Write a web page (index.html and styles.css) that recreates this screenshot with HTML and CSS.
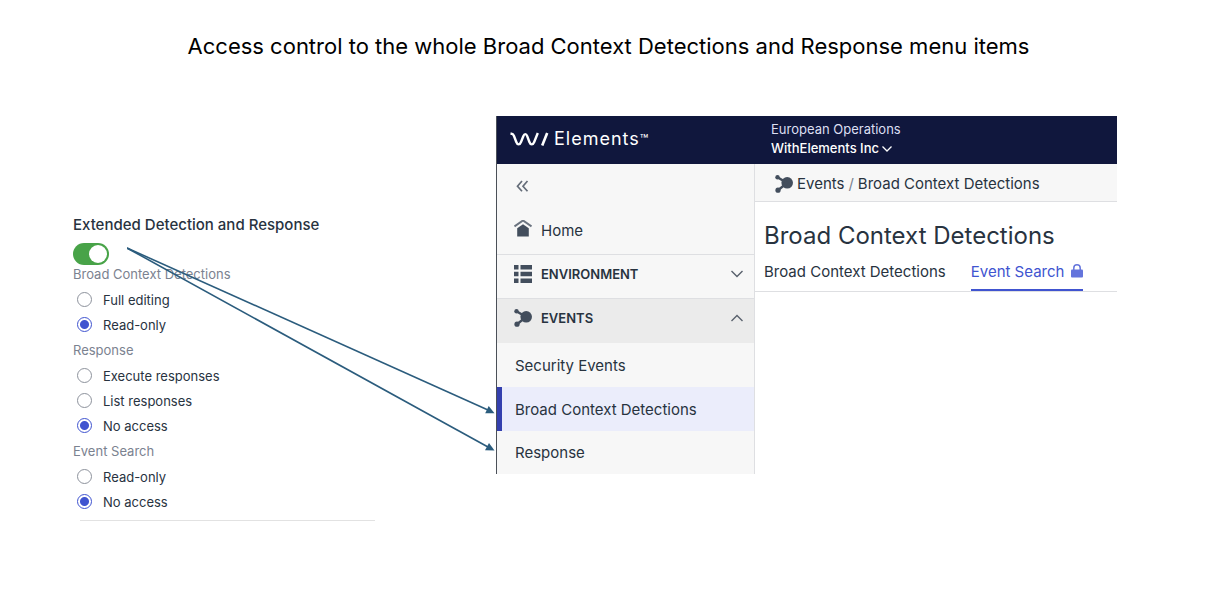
FILE: index.html
```html
<!DOCTYPE html>
<html lang="en">
<head>
<meta charset="utf-8">
<meta name="viewport" content="width=device-width, initial-scale=1">
<title>Access control</title>
<link rel="stylesheet" href="styles.css">
</head>
<body>
<svg class="symbols" aria-hidden="true">
  <symbol id="events" viewBox="0 0 18 18">
    <circle cx="12.2" cy="7.800" r="5.800"/><circle cx="2.500" cy="2.300" r="2.200"/><circle cx="3" cy="15.200" r="2.600"/>
    <path d="M2.500 2.300 12 8 3 15.200" fill="none" stroke="currentColor" stroke-width="2.400"/>
  </symbol>
</svg>
<div class="slide">
  <h1 class="slide-title">Access control to the whole Broad Context Detections and Response menu items</h1>

  <form class="permissions">
    <h2 class="permissions-title"><label for="xdr">Extended Detection and Response</label></h2>
    <input class="toggle" type="checkbox" role="switch" id="xdr" checked>
    <fieldset class="group">
      <legend class="legend">Broad Context Detections</legend>
      <label class="option"><input class="radio" type="radio" name="bcd">Full editing</label>
      <label class="option"><input class="radio" type="radio" name="bcd" checked>Read-only</label>
    </fieldset>
    <fieldset class="group">
      <legend class="legend">Response</legend>
      <label class="option"><input class="radio" type="radio" name="response">Execute responses</label>
      <label class="option"><input class="radio" type="radio" name="response">List responses</label>
      <label class="option"><input class="radio" type="radio" name="response" checked>No access</label>
    </fieldset>
    <fieldset class="group">
      <legend class="legend">Event Search</legend>
      <label class="option"><input class="radio" type="radio" name="search">Read-only</label>
      <label class="option"><input class="radio" type="radio" name="search" checked>No access</label>
    </fieldset>
    <hr class="rule">
  </form>

  <div class="app">
    <header class="topbar">
      <a class="brand" href="#">
        <svg class="brand-mark" width="39" height="15" viewBox="0 0 39 15" role="img" aria-label="WithSecure">
          <path d="M.5 1.800H1.600C2.800 1.800 3.300 2.400 3.900 3.800L6.300 10C7.500 13.200 9.700 13.200 11 10L13.300 4.200C14.400 1.400 16.200 1.400 17.200 4.200L19.400 10C20.600 13.200 22.900 13.200 24.200 10L27.800 1" fill="none" stroke="currentColor" stroke-width="2.400"/>
          <path d="M37.200 1 32.200 13.500" fill="none" stroke="currentColor" stroke-width="2.600"/>
        </svg>
        <span class="brand-name">Elements<span class="tm">™</span></span>
      </a>
      <div class="account">
        <span class="account-region">European Operations</span>
        <button class="account-switch" type="button">WithElements Inc<svg width="12" height="8" viewBox="0 0 12 8"><path d="m1.500 1.500 4.500 4.500 4.500-4.500" fill="none" stroke="currentColor" stroke-width="1.300"/></svg></button>
      </div>
    </header>

    <nav class="sidebar">
      <button class="row collapse" type="button" aria-label="Collapse menu">
        <svg width="16" height="14" viewBox="0 0 16 14"><path d="M7 2 2.500 7.200l4.500 5M12.500 2 8 7.200l4.500 5" fill="none" stroke="currentColor" stroke-width="1.700"/></svg>
      </button>
      <a class="row home" href="#">
        <svg class="icon" width="18" height="20" viewBox="0 0 18 20"><path d="M3.200 8.200 9 4.200l5.800 4V16.600H3.200z"/><path d="M.5 6.400 9 .400l8.500 6" fill="none" stroke="#6b7480" stroke-width="1.900"/></svg>
        Home
      </a>
      <button class="row section" type="button">
        <svg class="icon" width="18" height="18" viewBox="0 0 18 18"><path d="M0 0h4.500v4.500H0zM6.500 0H18v4.500H6.500zM0 6.700h4.500v4.500H0zM6.500 6.700H18v4.500H6.500zM0 13.500h4.500V18H0zM6.500 13.500H18V18H6.500z"/></svg>
        Environment
        <svg class="chevron" width="14" height="8" viewBox="0 0 14 8"><path d="m1.500 1 5.500 5.500L12.500 1" fill="none" stroke="currentColor" stroke-width="1.400"/></svg>
      </button>
      <button class="row section section-open" type="button" aria-expanded="true">
        <svg class="icon" width="18" height="18"><use href="#events"/></svg>
        Events
        <svg class="chevron" width="14" height="8" viewBox="0 0 14 8"><path d="M1.500 7 7 1.500 12.500 7" fill="none" stroke="currentColor" stroke-width="1.400"/></svg>
      </button>
      <a class="row item" href="#">Security Events</a>
      <a class="row item item-active" href="#" aria-current="page">Broad Context Detections</a>
      <a class="row item" href="#">Response</a>
    </nav>

    <main class="content">
      <div class="crumbs">
        <svg class="icon" width="18" height="18"><use href="#events"/></svg>
        <a href="#">Events</a><span class="slash">/</span><span>Broad Context Detections</span>
      </div>
      <h2 class="page-title">Broad Context Detections</h2>
      <div class="tabs">
        <a class="tab" href="#">Broad Context Detections</a>
        <a class="tab tab-active" href="#">Event Search
          <svg width="12" height="14" viewBox="0 0 12 14"><rect y="5.500" width="12" height="8" rx="1" fill="#6474dc"/><path d="M2.800 6V4a3.200 3.200 0 0 1 6.400 0v2" fill="none" stroke="#6474dc" stroke-width="1.500"/></svg>
        </a>
      </div>
    </main>
  </div>

  <svg class="arrows" width="368" height="206" viewBox="0 0 368 206" aria-hidden="true">
    <g fill="none" stroke="#2b5c7d" stroke-width="1.600"><path d="M0 1 361 163"/><path d="M0 1 361 200"/></g>
    <g fill="#2b5c7d"><path d="m367.500 166.300-9.300-.1 3.500-7.200z"/><path d="m367.500 203.500-9.500-.3 4-7.200z"/></g>
  </svg>
</div>
</body>
</html>
```
FILE: styles.css
```css
* { box-sizing: border-box; }

body {
  margin: 0;
  background: #fff;
  color: #28333f;
  font-family: Inter, "Liberation Sans", sans-serif;
}

a { color: inherit; text-decoration: none; }

button {
  border: 0;
  padding: 0;
  background: none;
  color: inherit;
  font: inherit;
  cursor: pointer;
}

.symbols { position: absolute; width: 0; height: 0; }
.icon { flex: none; color: #434e5d; fill: currentColor; }

.slide {
  position: relative;
  display: grid;
  grid-template-columns: 302px 1fr;
  column-gap: 121px;
  align-items: start;
  padding: 30px 89px 40px 73px;
}

.slide-title {
  grid-column: 1 / -1;
  margin: 0 0 54px;
  padding-left: 27px;
  color: #000;
  font-size: 22px;
  font-weight: 400;
  line-height: 32px;
  text-align: center;
}

/* Permissions form */
.permissions { padding-top: 97px; font-size: 13px; }

.permissions-title {
  margin: 0 0 6px;
  font-size: 15px;
  font-weight: 500;
  line-height: 24px;
}

.toggle {
  appearance: none;
  display: flex;
  align-items: center;
  width: 36px;
  height: 22px;
  margin: 0 0 -4px;
  padding: 2px;
  border-radius: 11px;
  background: #48a348;
}

.toggle::before {
  content: "";
  width: 18px;
  height: 18px;
  border-radius: 50%;
  background: #fff;
}

.toggle:checked { justify-content: flex-end; }

.group { margin: 0; padding: 0; border: 0; }
.legend { padding: 0; color: #7b8290; line-height: 26px; }

.option {
  display: flex;
  align-items: center;
  gap: 11px;
  height: 25px;
  padding-left: 4px;
}

.radio {
  appearance: none;
  width: 15px;
  height: 15px;
  margin: 0;
  border: 1px solid #8d929c;
  border-radius: 50%;
  background: #fff;
}

.radio:checked {
  border-color: #4054d0;
  background: radial-gradient(#4054d0 4px, #fff 5px);
}

.rule { margin: 6px 0 0 7px; border: 0; border-top: 1px solid #e2e2e2; }

/* Application window */
.app {
  display: grid;
  grid-template-columns: 258px 1fr;
  border-left: 1px solid #4b5058;
}

.topbar {
  grid-column: 1 / -1;
  display: grid;
  grid-template-columns: subgrid;
  align-items: center;
  height: 48px;
  padding-bottom: 2px;
  background: #10173d;
  color: #fff;
}

.brand { display: flex; align-items: center; gap: 5px; padding-left: 13px; }
.brand-name { font-size: 18px; font-weight: 400; line-height: 20px; letter-spacing: 1px; }
.tm { font-size: 14px; letter-spacing: 0; }

.account {
  display: flex;
  flex-direction: column;
  align-items: flex-start;
  padding-left: 16px;
  font-size: 13px;
  line-height: 19px;
}

.account-region { color: #dcdff2; }
.account-switch { display: flex; align-items: center; gap: 2px; font-weight: 500; }

.sidebar { border-right: 1px solid #dedfe2; background: #f7f7f7; font-size: 15px; }

.row {
  display: flex;
  align-items: center;
  gap: 9px;
  width: 100%;
  height: 44px;
  padding: 0 10px 0 18px;
}

.collapse { color: #656d79; }
.home { height: 46px; padding-bottom: 2px; }
.home, .section { padding-left: 17px; }

.section {
  padding-bottom: 6px;
  border-top: 1px solid #dedfe2;
  font-size: 13px;
  font-weight: 600;
  text-transform: uppercase;
}

.section-open { height: 45px; background: #ebebeb; }
.chevron { margin-left: auto; color: #59616d; }
.item-active { border-left: 5px solid #3440ae; padding-left: 13px; background: #ebedfb; }
.item:last-child { height: 43px; }

.content { min-width: 0; }

.crumbs {
  display: flex;
  align-items: center;
  gap: 4px;
  height: 38px;
  padding: 2px 0 0 20px;
  border-bottom: 1px solid #dedfe2;
  background: #f7f7f7;
  font-size: 15px;
}

.slash { color: #7b8290; }

.page-title {
  margin: 16px 0 0;
  padding-left: 9px;
  font-size: 24px;
  font-weight: 400;
  line-height: 35px;
}

.tabs {
  display: flex;
  gap: 25px;
  padding-left: 9px;
  border-bottom: 1px solid #dedfe2;
  font-size: 15px;
}

.tab { display: flex; align-items: center; gap: 7px; height: 38px; border-bottom: 2px solid transparent; }
.tab-active { border-color: #4054d0; color: #4054d0; }

/* Callout arrows drawn over both panels */
.arrows { position: absolute; left: 127px; top: 247px; pointer-events: none; }
```
